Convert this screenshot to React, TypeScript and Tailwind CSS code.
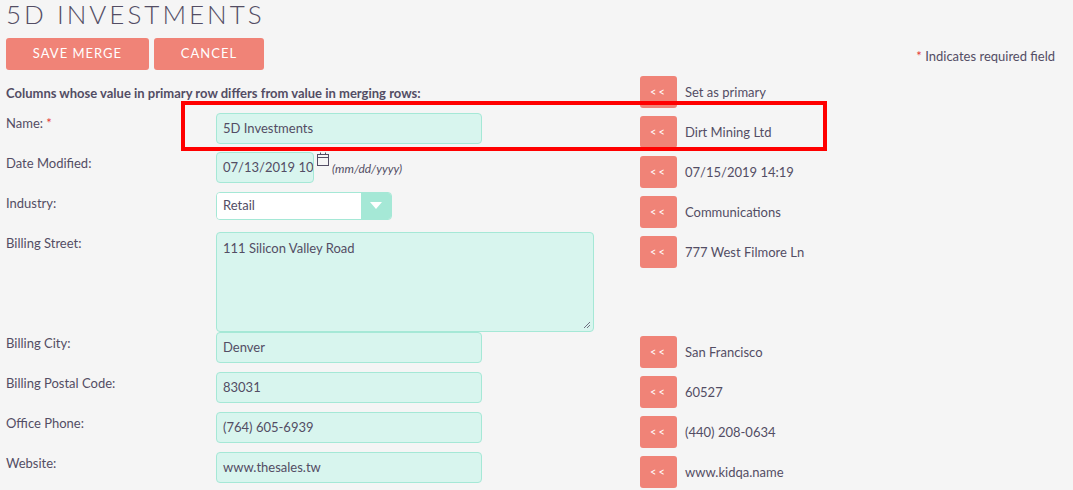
import React from "react";

const F = { fontFamily: "Lato, 'Open Sans', sans-serif" };

function Merge({ text }: { text: string }) {
  return (
    <div className="flex items-start gap-[8px] pt-[4px]">
      <div className="w-[37px] h-[32px] rounded-[3px] bg-[#f08377] text-white text-[11px] flex items-center justify-center tracking-[2px]">&lt;&lt;</div>
      <div className="text-[13px] text-[#534d64] leading-[32px]">{text}</div>
    </div>
  );
}

const inputCls =
  "h-[31px] rounded-[4px] border border-[#a5e8d6] bg-[#d8f5ee] px-[6px] text-[13px] text-[#534d64] flex items-center overflow-hidden whitespace-nowrap";

function Row({ label, req, h = 40, children, merge }: { label: string; req?: boolean; h?: number; children?: React.ReactNode; merge: string }) {
  return (
    <div className="flex" style={{ height: h }}>
      <div className="w-[210px] text-[13px] text-[#534d64] pt-[2px]">
        {label}
        {req && <span className="text-[#e53935]"> *</span>}
      </div>
      <div className="w-[424px]">{children}</div>
      <Merge text={merge} />
    </div>
  );
}

export default function App() {
  return (
    <div className="relative w-[1073px] h-[490px] overflow-hidden bg-[#f5f5f5] px-[6px]" style={F}>
      <div className="text-[26px] font-light tracking-[3px] text-[#534d64] leading-[26px] mt-[1px]">5D INVESTMENTS</div>
      <div className="flex items-center mt-[11px]">
        <div className="w-[143px] h-[32px] rounded-[3px] bg-[#f08377] text-white text-[13px] tracking-[1px] flex items-center justify-center">SAVE MERGE</div>
        <div className="ml-[5px] w-[110px] h-[32px] rounded-[3px] bg-[#f08377] text-white text-[13px] tracking-[1px] flex items-center justify-center">CANCEL</div>
        <div className="ml-auto mr-[12px] mt-[6px] text-[13px] text-[#534d64]"><span className="text-[#e53935]">*</span> Indicates required field</div>
      </div>
      <div className="flex h-[40px] mt-[2px]">
        <div className="w-[634px] text-[13px] font-bold text-[#534d64] pt-[12px]">Columns whose value in primary row differs from value in merging rows:</div>
        <Merge text="Set as primary" />
      </div>
      <Row label="Name:" req merge="Dirt Mining Ltd">
        <div className={`${inputCls} w-[266px] mt-[1px]`}>5D Investments</div>
      </Row>
      <Row label="Date Modified:" merge="07/15/2019 14:19">
        <div className="flex items-start">
          <div className={`${inputCls} w-[98px]`}>07/13/2019 10:12</div>
          <svg width="14" height="15" viewBox="0 0 14 15" className="ml-[2px]" fill="none" stroke="#534d64" strokeWidth="1">
            <rect x="1.5" y="2.5" width="11" height="11" />
            <line x1="1.5" y1="5.5" x2="12.5" y2="5.5" />
            <line x1="4.5" y1="0.5" x2="4.5" y2="3" />
            <line x1="9.5" y1="0.5" x2="9.5" y2="3" />
          </svg>
          <span className="ml-[2px] mt-[8px] text-[12px] italic text-[#534d64]">(mm/dd/yyyy)</span>
        </div>
      </Row>
      <Row label="Industry:" merge="Communications">
        <div className="flex w-[176px] h-[28px] rounded-[4px] border border-[#a5e8d6] overflow-hidden">
          <div className="flex-1 bg-white text-[13px] text-[#534d64] px-[6px] flex items-center">Retail</div>
          <div className="w-[30px] bg-[#a5e8d6] flex items-center justify-center">
            <svg width="12" height="8" viewBox="0 0 12 8"><polygon points="0,0 12,0 6,7" fill="white" /></svg>
          </div>
        </div>
      </Row>
      <Row label="Billing Street:" h={100} merge="777 West Filmore Ln">
        <div className="relative w-[378px] h-[100px] rounded-[4px] border border-[#a5e8d6] bg-[#d8f5ee] px-[6px] pt-[6px] text-[13px] text-[#534d64]">
          111 Silicon Valley Road
          <svg width="8" height="8" viewBox="0 0 8 8" className="absolute right-[2px] bottom-[2px]" stroke="#534d64" strokeWidth="0.8">
            <line x1="1" y1="7" x2="7" y2="1" />
            <line x1="4" y1="7" x2="7" y2="4" />
          </svg>
        </div>
      </Row>
      <Row label="Billing City:" merge="San Francisco">
        <div className={`${inputCls} w-[266px]`}>Denver</div>
      </Row>
      <Row label="Billing Postal Code:" merge="60527">
        <div className={`${inputCls} w-[266px]`}>83031</div>
      </Row>
      <Row label="Office Phone:" merge="(440) 208-0634">
        <div className={`${inputCls} w-[266px]`}>(764) 605-6939</div>
      </Row>
      <Row label="Website:" merge="www.kidqa.name">
        <div className={`${inputCls} w-[266px]`}>www.thesales.tw</div>
      </Row>
      <div className="absolute left-[181px] top-[101px] w-[646px] h-[50px] border-[4px] border-[#ff0000]" />
    </div>
  );
}
